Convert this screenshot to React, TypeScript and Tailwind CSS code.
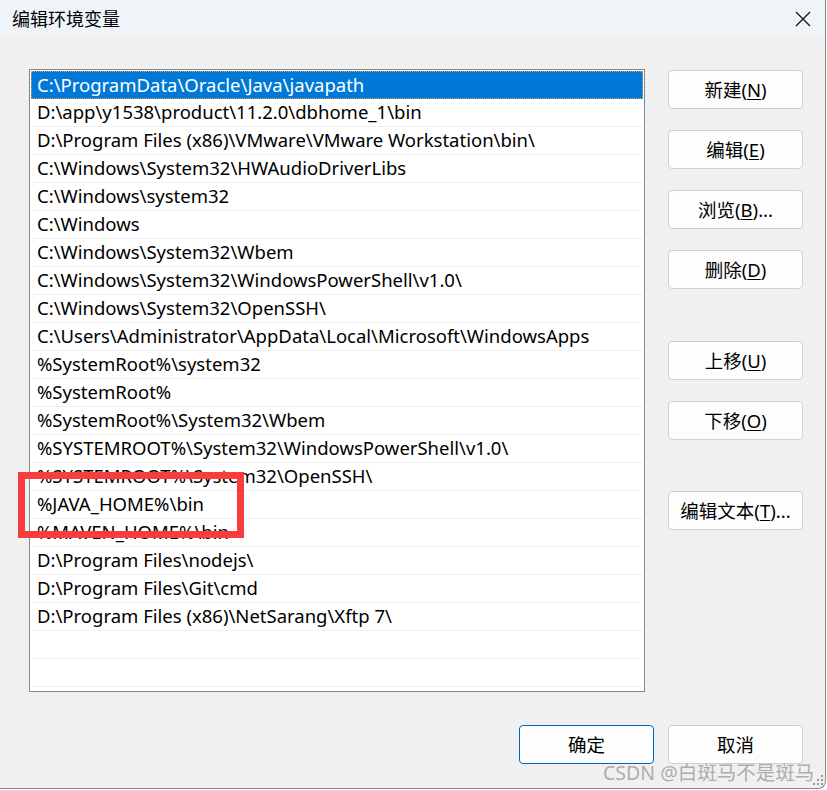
import React from "react";

const paths = [
  "C:\\ProgramData\\Oracle\\Java\\javapath",
  "D:\\app\\y1538\\product\\11.2.0\\dbhome_1\\bin",
  "D:\\Program Files (x86)\\VMware\\VMware Workstation\\bin\\",
  "C:\\Windows\\System32\\HWAudioDriverLibs",
  "C:\\Windows\\system32",
  "C:\\Windows",
  "C:\\Windows\\System32\\Wbem",
  "C:\\Windows\\System32\\WindowsPowerShell\\v1.0\\",
  "C:\\Windows\\System32\\OpenSSH\\",
  "C:\\Users\\Administrator\\AppData\\Local\\Microsoft\\WindowsApps",
  "%SystemRoot%\\system32",
  "%SystemRoot%",
  "%SystemRoot%\\System32\\Wbem",
  "%SYSTEMROOT%\\System32\\WindowsPowerShell\\v1.0\\",
  "%SYSTEMROOT%\\System32\\OpenSSH\\",
  "%JAVA_HOME%\\bin",
  "%MAVEN_HOME%\\bin",
  "D:\\Program Files\\nodejs\\",
  "D:\\Program Files\\Git\\cmd",
  "D:\\Program Files (x86)\\NetSarang\\Xftp 7\\",
  "",
  "",
];

const font = { fontFamily: '"Noto Sans", "Noto Sans CJK SC", sans-serif' };

// label with an underlined access key, e.g. 新建(N)
function Btn({ pre, k, post = ")", primary = false }: { pre: string; k: string; post?: string; primary?: boolean }) {
  return (
    <button
      className={`h-[39px] w-[135px] rounded-[4px] border bg-[#fdfdfd] text-[18.5px] text-black ${
        primary ? "border-[#0067c0] border-[1.5px]" : "border-[#d0d0d0]"
      }`}
    >
      {pre}
      {k && <span className="underline underline-offset-2">{k}</span>}
      {k && post}
    </button>
  );
}

export default function App() {
  return (
    <div className="relative h-[790px] w-[827px] overflow-hidden bg-white" style={font}>
      <div className="flex h-[789px] w-[826px] flex-col rounded-br-[8px] border-r border-b border-[#8a8a8a] bg-[#f0f0f0]">
        {/* title bar */}
        <div className="flex h-[38px] shrink-0 items-center justify-between bg-[#eef4f8] pl-[12px] pr-[14px]">
          <span className="text-[18px] text-black">编辑环境变量</span>
          <svg width="18" height="18" viewBox="0 0 18 18" className="mr-[-1px]">
            <path d="M2 2 L16 16 M16 2 L2 16" stroke="#1a1a1a" strokeWidth="1.4" />
          </svg>
        </div>

        <div className="flex pl-[29px] pt-[31px]">
          {/* list */}
          <div className="h-[623px] w-[616px] border-[1.5px] border-[#838b97] bg-white p-px">
            {paths.map((p, i) => (
              <div
                key={i}
                className={`flex h-[28px] items-center pl-[6px] text-[18.5px] leading-none whitespace-nowrap ${
                  i === 0
                    ? "bg-[#0078d7] text-white outline-1 outline-dotted outline-[#f0a040] -outline-offset-1"
                    : "border-b border-[#f0f0f0] text-black"
                }`}
              >
                {p}
              </div>
            ))}
          </div>

          {/* side buttons */}
          <div className="ml-[23px] flex flex-col pt-px">
            <div className="flex flex-col gap-[21px]">
              <Btn pre="新建(" k="N" />
              <Btn pre="编辑(" k="E" />
              <Btn pre="浏览(" k="B" post=")..." />
              <Btn pre="删除(" k="D" />
            </div>
            <div className="mt-[52px] flex flex-col gap-[21px]">
              <Btn pre="上移(" k="U" />
              <Btn pre="下移(" k="O" />
            </div>
            <div className="mt-[51px]">
              <Btn pre="编辑文本(" k="T" post=")..." />
            </div>
          </div>
        </div>

        {/* bottom buttons */}
        <div className="mt-[33px] flex justify-end gap-[14px] pr-[22px]">
          <Btn pre="确定" k="" primary />
          <Btn pre="取消" k="" />
        </div>
      </div>

      {/* red highlight box */}
      <div className="pointer-events-none absolute left-[18px] top-[472px] h-[66px] w-[226px] border-[7px] border-[#f93d3d]" />

      {/* watermark */}
      <div className="pointer-events-none absolute left-[603px] top-[758px] text-[19.5px] text-[#9a9a9a]/80">
        CSDN @白斑马不是斑马
      </div>

      {/* resize grip */}
      <svg width="12" height="12" viewBox="0 0 12 12" className="absolute left-[812px] top-[774px]">
        {[
          [9, 1],
          [5, 5],
          [9, 5],
          [1, 9],
          [5, 9],
          [9, 9],
        ].map(([x, y], i) => (
          <rect key={i} x={x} y={y} width="2" height="2" fill="#9a9a9a" />
        ))}
      </svg>
    </div>
  );
}
